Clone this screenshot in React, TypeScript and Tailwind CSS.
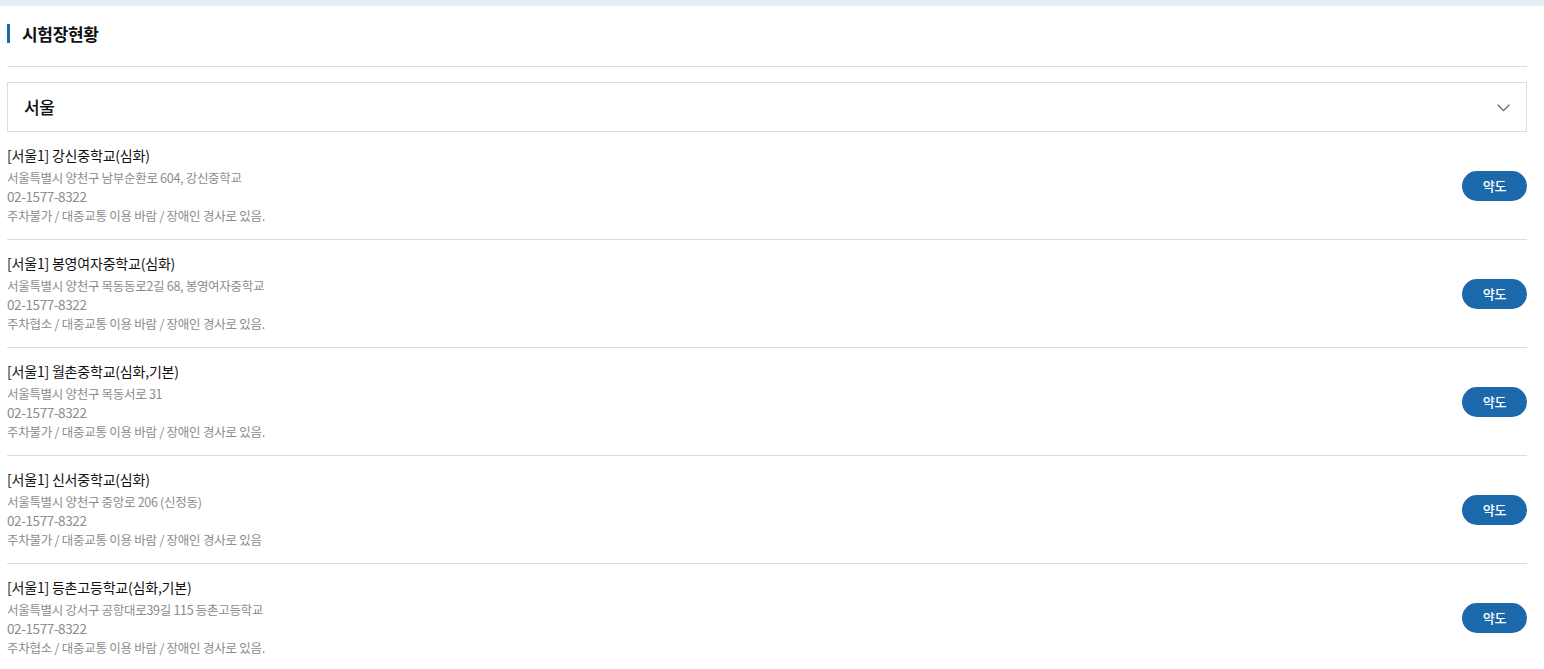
interface Site {
  name: string;
  address: string;
  phone: string;
  notes: string;
}

const SITES: Site[] = [
  {
    name: '[서울1] 강신중학교(심화)',
    address: '서울특별시 양천구 남부순환로 604, 강신중학교',
    phone: '02-1577-8322',
    notes: '주차불가 / 대중교통 이용 바람 / 장애인 경사로 있음.',
  },
  {
    name: '[서울1] 봉영여자중학교(심화)',
    address: '서울특별시 양천구 목동동로2길 68, 봉영여자중학교',
    phone: '02-1577-8322',
    notes: '주차협소 / 대중교통 이용 바람 / 장애인 경사로 있음.',
  },
  {
    name: '[서울1] 월촌중학교(심화,기본)',
    address: '서울특별시 양천구 목동서로 31',
    phone: '02-1577-8322',
    notes: '주차불가 / 대중교통 이용 바람 / 장애인 경사로 있음.',
  },
  {
    name: '[서울1] 신서중학교(심화)',
    address: '서울특별시 양천구 중앙로 206 (신정동)',
    phone: '02-1577-8322',
    notes: '주차불가 / 대중교통 이용 바람 / 장애인 경사로 있음',
  },
  {
    name: '[서울1] 등촌고등학교(심화,기본)',
    address: '서울특별시 강서구 공항대로39길 115 등촌고등학교',
    phone: '02-1577-8322',
    notes: '주차협소 / 대중교통 이용 바람 / 장애인 경사로 있음.',
  },
];

export default function App() {
  return (
    <div className="min-h-screen bg-white font-['Noto_Sans_CJK_KR','Noto_Sans',sans-serif] text-[#111]">
      <div className="h-[6px] bg-[#e3eef8]" />

      <div className="pl-[7px] pr-[17px]">
        {/* Title */}
        <div className="flex items-center h-[61px] border-b border-[#dddddd] pb-[5px]">
          <span className="w-[3px] h-[19px] bg-[#1b69ab] mr-[12px]" />
          <h1 className="text-[17px] font-bold tracking-[-0.3px]">시험장현황</h1>
        </div>

        {/* Region select */}
        <div className="mt-[15px] flex items-center justify-between h-[50px] border border-[#dddddd] pl-[16px] pr-[16px]">
          <span className="text-[17px] font-medium tracking-[-0.5px]">서울</span>
          <svg width="13" height="8" viewBox="0 0 13 8" fill="none" className="mt-[2px]">
            <path d="M0.7 0.7 L6.5 6.6 L12.3 0.7" stroke="#666" strokeWidth="1.3" />
          </svg>
        </div>

        {/* Sites */}
        <div>
          {SITES.map((site, i) => (
            <div
              key={i}
              className={`flex items-center justify-between pt-[13px] pb-[14px] ${
                i < SITES.length - 1 ? 'border-b border-[#dddddd]' : ''
              }`}
            >
              <div>
                <div className="text-[14px] leading-[20px] tracking-[-0.2px] text-[#111] mb-[3px]">{site.name}</div>
                <div className="text-[12.5px] leading-[19px] tracking-[-0.3px] text-[#8c8c8c]">{site.address}</div>
                <div className="text-[13.5px] leading-[19px] tracking-[-0.4px] text-[#8c8c8c]">{site.phone}</div>
                <div className="text-[12.5px] leading-[19px] tracking-[-0.25px] text-[#8c8c8c]">{site.notes}</div>
              </div>
              <button className="w-[65px] h-[30px] mt-[2px] rounded-full bg-[#1b69ab] text-white text-[13px] font-medium tracking-[-0.3px]">
                약도
              </button>
            </div>
          ))}
        </div>
      </div>
    </div>
  );
}
